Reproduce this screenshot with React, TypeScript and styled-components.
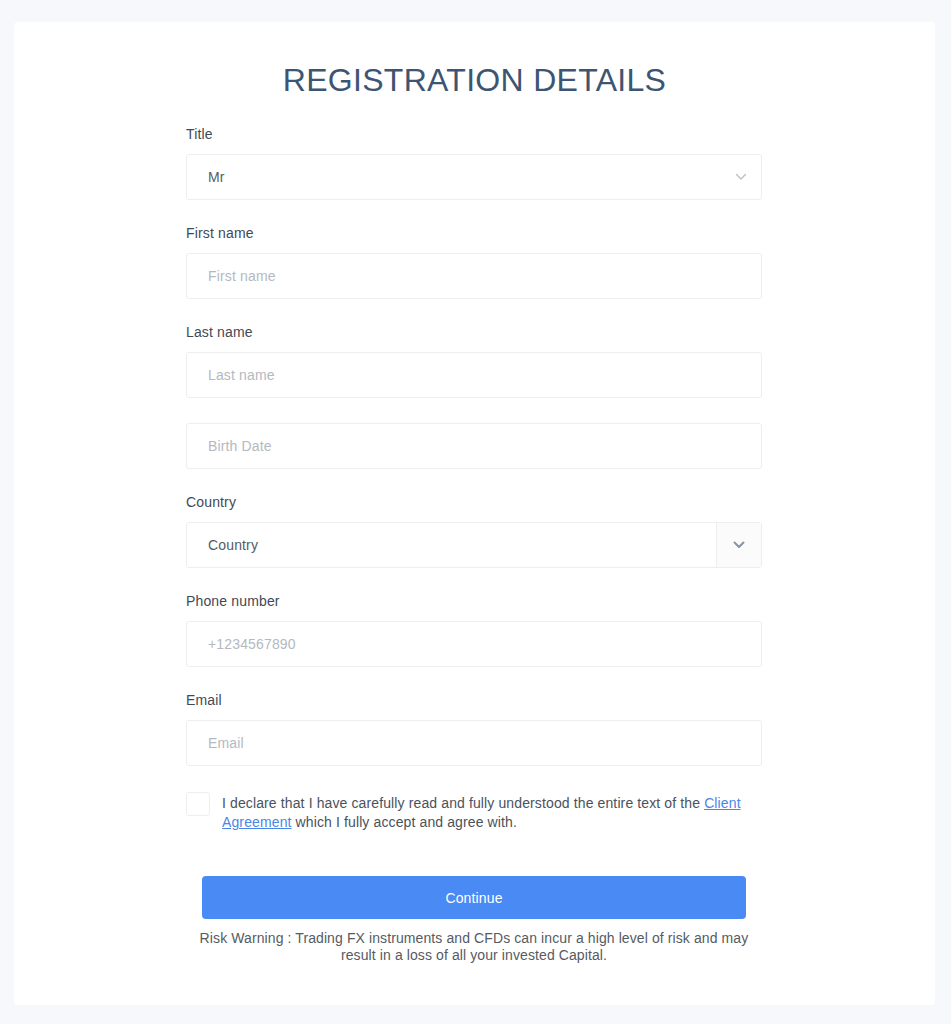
import styled, { createGlobalStyle } from "styled-components";

const GlobalStyle = createGlobalStyle`
  html, body {
    margin: 0;
    padding: 0;
    background: #f7f8fc;
    font-family: "Liberation Sans", Arial, sans-serif;
  }
  * { box-sizing: border-box; }
`;

type Field = {
  label?: string;
  placeholder: string;
  value?: string;
  kind?: "select" | "addon";
};

const fields: Field[] = [
  { label: "Title", placeholder: "Mr", value: "Mr", kind: "select" },
  { label: "First name", placeholder: "First name" },
  { label: "Last name", placeholder: "Last name" },
  { placeholder: "Birth Date" },
  { label: "Country", placeholder: "Country", value: "Country", kind: "addon" },
  { label: "Phone number", placeholder: "+1234567890" },
  { label: "Email", placeholder: "Email" },
];

const Chevron = ({ bold }: { bold?: boolean }) => (
  <svg width="12" height="8" viewBox="0 0 12 8" fill="none">
    <path
      d="M1.5 1.5 L6 6 L10.5 1.5"
      stroke={bold ? "#8a93a0" : "#b9bec6"}
      strokeWidth={bold ? 2 : 1.3}
      strokeLinecap="round"
      strokeLinejoin="round"
    />
  </svg>
);

export default function App() {
  return (
    <>
      <GlobalStyle />
      <Page>
        <Card>
          <Heading>REGISTRATION DETAILS</Heading>
          <Form>
            {fields.map((f) => (
              <Group key={f.placeholder} $bare={!f.label}>
                {f.label && <Label>{f.label}</Label>}
                <Box>
                  {f.value ? (
                    <Value>{f.value}</Value>
                  ) : (
                    <Input placeholder={f.placeholder} />
                  )}
                  {f.kind === "select" && (
                    <Arrow>
                      <Chevron />
                    </Arrow>
                  )}
                  {f.kind === "addon" && (
                    <Addon>
                      <Chevron bold />
                    </Addon>
                  )}
                </Box>
              </Group>
            ))}
            <Agree>
              <Check />
              <AgreeText>
                I declare that I have carefully read and fully understood the
                entire text of the <Link href="#">Client Agreement</Link> which I
                fully accept and agree with.
              </AgreeText>
            </Agree>
            <Submit>Continue</Submit>
            <Warning>
              Risk Warning : Trading FX instruments and CFDs can incur a high
              level of risk and may result in a loss of all your invested
              Capital.
            </Warning>
          </Form>
        </Card>
      </Page>
    </>
  );
}

const Page = styled.div`
  padding: 22px 16px 19px 14px;
  min-height: 1024px;
`;

const Card = styled.div`
  background: #ffffff;
  border-radius: 4px;
  padding: 38px 0 41px;
  display: flex;
  flex-direction: column;
  align-items: center;
`;

const Heading = styled.h1`
  margin: 0 0 24px;
  font-size: 32px;
  font-weight: 400;
  line-height: 40px;
  color: #3d5572;
  letter-spacing: 0.3px;
`;

const Form = styled.div`
  width: 576px;
  margin-right: 1px;
`;

const Group = styled.div<{ $bare?: boolean }>`
  margin-bottom: 23px;
  padding-top: ${({ $bare }) => ($bare ? "2px" : "0")};
`;

const Label = styled.div`
  font-size: 14px;
  line-height: 20px;
  color: #3f4a57;
  margin-bottom: 10px;
  letter-spacing: 0.15px;
`;

const Box = styled.div`
  position: relative;
  display: flex;
  align-items: center;
  height: 46px;
  border: 1px solid #eceef2;
  border-radius: 3px;
  background: #fff;
`;

const Input = styled.input`
  flex: 1;
  height: 100%;
  border: none;
  outline: none;
  background: transparent;
  padding: 0 21px;
  font-family: inherit;
  font-size: 14px;
  letter-spacing: 0.15px;
  color: #444;

  &::placeholder {
    color: #b4b9c1;
  }
`;

const Value = styled.div`
  flex: 1;
  padding: 0 21px;
  font-size: 14px;
  letter-spacing: 0.15px;
  color: #555c66;
`;

const Arrow = styled.div`
  display: flex;
  padding-right: 14px;
`;

const Addon = styled.div`
  width: 45px;
  height: 100%;
  border-left: 1px solid #eceef2;
  background: #fbfbfc;
  display: flex;
  align-items: center;
  justify-content: center;
`;

const Agree = styled.div`
  display: flex;
  align-items: flex-start;
  gap: 12px;
  margin-top: 26px;
`;

const Check = styled.div`
  flex: none;
  width: 24px;
  height: 24px;
  border: 1px solid #eceef2;
  border-radius: 3px;
  background: #fff;
`;

const AgreeText = styled.p`
  margin: 2px 0 0;
  font-size: 14px;
  line-height: 19px;
  letter-spacing: 0.12px;
  color: #4a525c;
  padding-right: 14px;
`;

const Link = styled.a`
  color: #4a86e8;
  text-decoration: underline;
`;

const Submit = styled.button`
  display: block;
  width: 544px;
  height: 43px;
  margin: 44px auto 0;
  border: none;
  border-radius: 4px;
  background: #4a8af4;
  color: #fff;
  font-family: inherit;
  font-size: 14px;
  letter-spacing: 0.15px;
  cursor: pointer;
`;

const Warning = styled.p`
  margin: 11px auto 0;
  width: 560px;
  text-align: center;
  font-size: 14px;
  line-height: 17px;
  letter-spacing: 0.1px;
  color: #555b63;
`;
